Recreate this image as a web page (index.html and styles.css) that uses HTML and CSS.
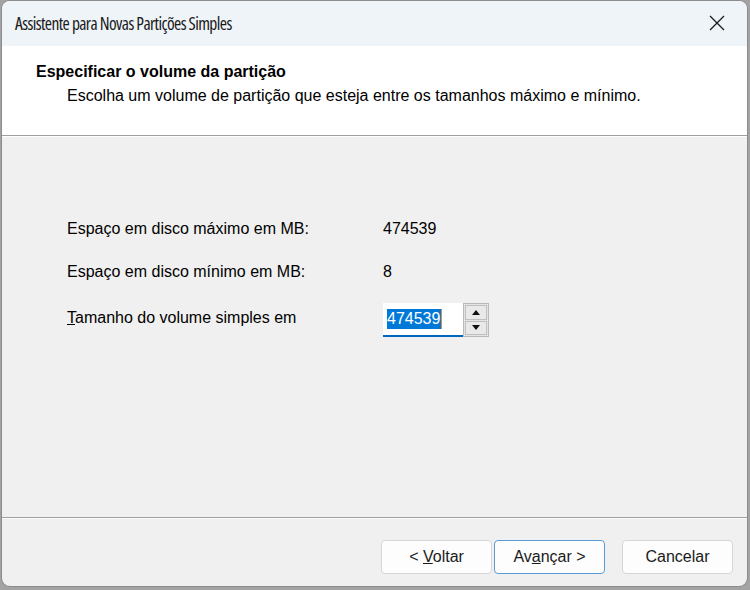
FILE: index.html
```html
<!DOCTYPE html>
<html lang="pt">
<head>
<meta charset="utf-8">
<title>Assistente para Novas Partições Simples</title>
<link rel="stylesheet" href="styles.css">
</head>
<body>
<div class="window">
  <div class="titlebar">
    <span class="title">Assistente para Novas Partições Simples</span>
    <span class="close" aria-label="Fechar">
      <svg width="16" height="16" viewBox="0 0 16 16"><path d="M1 1 L15 15 M15 1 L1 15" stroke="#1a1a1a" stroke-width="1.3" fill="none"/></svg>
    </span>
  </div>
  <div class="header">
    <div class="h-title">Especificar o volume da partição</div>
    <div class="h-sub">Escolha um volume de partição que esteja entre os tamanhos máximo e mínimo.</div>
  </div>
  <div class="content">
    <div class="row">
      <span class="label">Espaço em disco máximo em MB:</span>
      <span class="value">474539</span>
    </div>
    <div class="row">
      <span class="label">Espaço em disco mínimo em MB:</span>
      <span class="value">8</span>
    </div>
    <div class="row row-input">
      <span class="label"><u>T</u>amanho do volume simples em</span>
      <div class="spin">
        <div class="field"><span class="sel">474539</span><span class="caret"></span></div>
        <div class="arrows">
          <div class="arr"><svg width="8" height="5" viewBox="0 0 8 5"><path d="M0 5 L4 0 L8 5Z" fill="#111"/></svg></div>
          <div class="arr"><svg width="8" height="5" viewBox="0 0 8 5"><path d="M0 0 L8 0 L4 5Z" fill="#111"/></svg></div>
        </div>
      </div>
    </div>
  </div>
  <div class="footer">
    <button class="btn">&lt; <u>V</u>oltar</button>
    <button class="btn btn-default">Av<u>a</u>nçar &gt;</button>
    <button class="btn btn-cancel">Cancelar</button>
  </div>
</div>
</body>
</html>
```
FILE: styles.css
```css
html, body {
  margin: 0;
  padding: 0;
}
body {
  width: 750px;
  height: 590px;
  background: #a3a3a3;
  overflow: hidden;
  font-family: "Liberation Sans", Arial, sans-serif;
}
.window {
  margin: 1px 0 0 2px;
  width: 745px;
  height: 585px;
  background: #f0f0f0;
  border-radius: 8px;
  overflow: hidden;
  display: flex;
  flex-direction: column;
  box-shadow: 0 0 0 1px #8c8c8c;
}
.titlebar {
  height: 45px;
  background: #eff4f9;
  display: flex;
  align-items: center;
  justify-content: space-between;
  padding: 0 22px 0 13px;
  flex-shrink: 0;
}
.title {
  font-family: "Open Sans", "Liberation Sans", sans-serif;
  font-size: 17.5px;
  color: #1a1a1a;
  letter-spacing: -0.6px;
  font-stretch: condensed;
  margin-top: -1px;
}
.close {
  display: flex;
  margin-top: -2px;
}
.header {
  height: 90px;
  background: #fff;
  border-bottom: 1px solid #a0a0a0;
  box-shadow: 0 1px 0 #fff;
  padding: 17px 0 0 34px;
  box-sizing: border-box;
  flex-shrink: 0;
}
.h-title {
  font-weight: bold;
  font-size: 16px;
  line-height: 18px;
  color: #000;
}
.h-sub {
  font-size: 16px;
  line-height: 18px;
  color: #000;
  margin: 6px 0 0 31px;
}
.content {
  flex: 1;
  padding: 84px 0 0 65px;
  border-bottom: 1px solid #a0a0a0;
  box-shadow: 0 1px 0 #fcfcfc;
  box-sizing: border-box;
}
.row {
  display: flex;
  align-items: center;
  height: 18px;
  margin-bottom: 25px;
  font-size: 16px;
  color: #000;
}
.label {
  width: 316px;
  flex-shrink: 0;
}
.row-input {
  align-items: flex-start;
  margin-top: 28px;
}
.spin {
  display: flex;
  margin-top: -6px;
}
.field {
  width: 80px;
  height: 34px;
  background: #fff;
  border-bottom: 2px solid #0067c0;
  box-sizing: border-box;
  display: flex;
  align-items: center;
  padding-left: 4px;
  padding-bottom: 1px;
}
.sel {
  background: #0078d7;
  color: #fff;
  font-size: 16px;
  line-height: 20px;
  padding: 0 1px 0 0;
}
.caret {
  width: 1px;
  height: 20px;
  background: #e08a3c;
}
.arrows {
  width: 26px;
  height: 34px;
  border: 1px solid #b9b9b9;
  box-sizing: border-box;
  background: #e4e4e4;
  display: flex;
  flex-direction: column;
  padding: 1px;
  gap: 1px;
}
.arr {
  flex: 1;
  background: #e9e9e9;
  border: 1px solid #bfbfbf;
  display: flex;
  align-items: center;
  justify-content: center;
}
.footer {
  height: 68px;
  flex-shrink: 0;
  display: flex;
  align-items: flex-start;
  padding: 22px 0 0 379px;
  box-sizing: border-box;
  gap: 2px;
}
.btn {
  width: 111px;
  height: 34px;
  background: #fdfdfd;
  border: 1px solid #d6d6d6;
  border-radius: 4px;
  font-family: "Liberation Sans", Arial, sans-serif;
  font-size: 16px;
  color: #1a1a1a;
  padding: 0;
}
.btn-default {
  border-color: #5b9bd5;
}
.btn-cancel {
  margin-left: 15px;
}
```
